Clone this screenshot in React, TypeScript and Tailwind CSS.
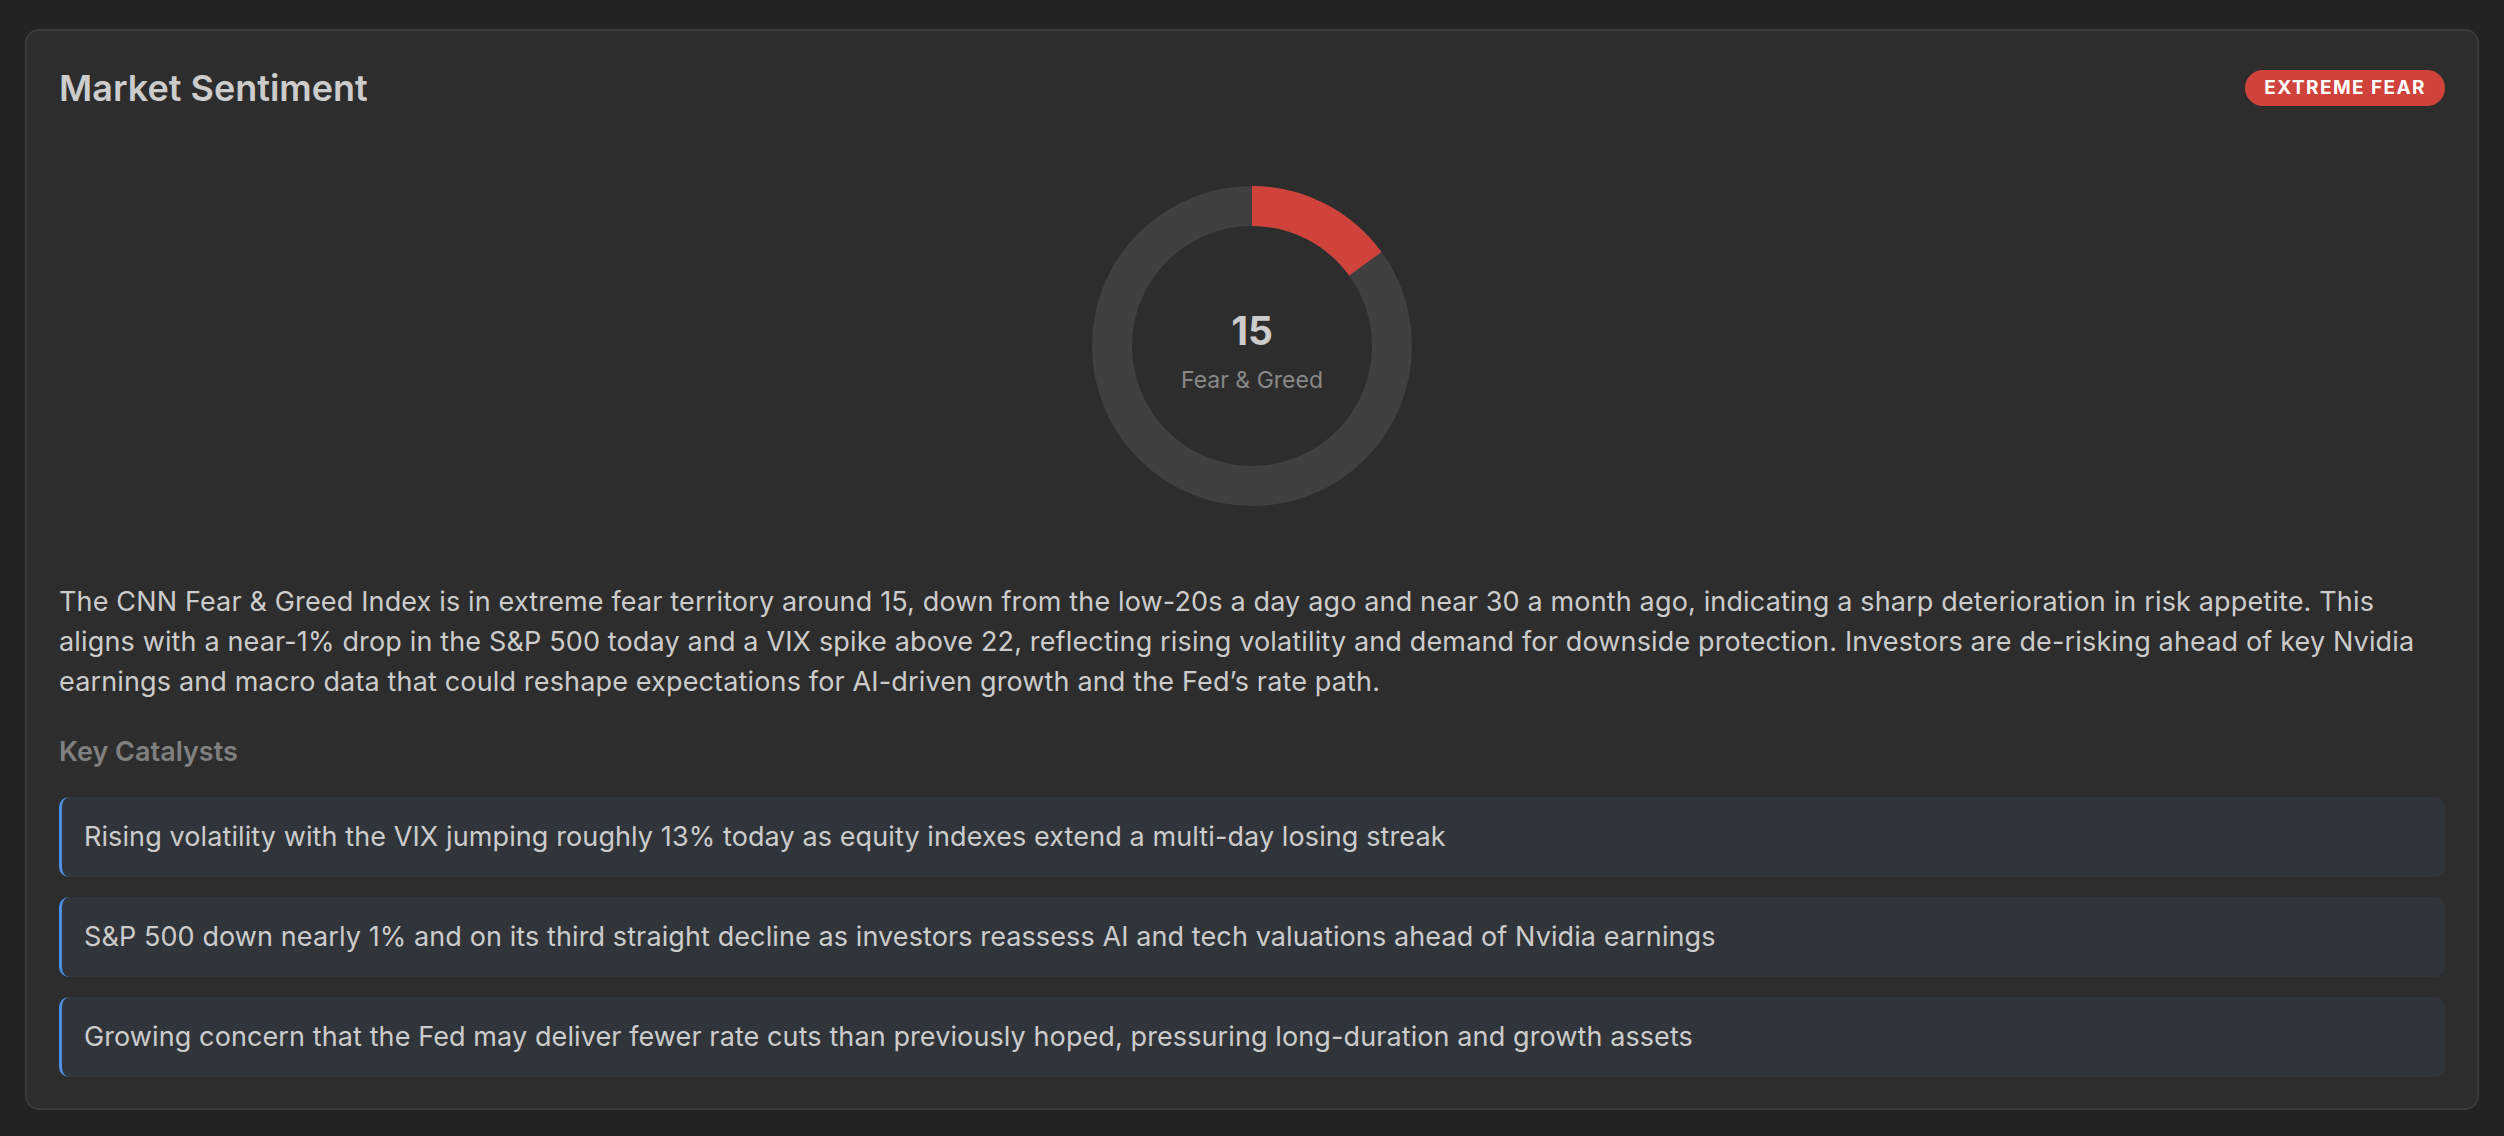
import React from "react";

const catalysts = [
  "Rising volatility with the VIX jumping roughly 13% today as equity indexes extend a multi-day losing streak",
  "S&P 500 down nearly 1% and on its third straight decline as investors reassess AI and tech valuations ahead of Nvidia earnings",
  "Growing concern that the Fed may deliver fewer rate cuts than previously hoped, pressuring long-duration and growth assets",
];

function Gauge({ value }: { value: number }) {
  const r = 140;
  const c = 2 * Math.PI * r;
  const dash = (value / 100) * c;
  return (
    <div className="relative w-[320px] h-[320px]">
      <svg width="320" height="320" viewBox="0 0 320 320" className="block">
        <circle cx="160" cy="160" r={r} fill="none" stroke="#404040" strokeWidth="40" />
        <circle
          cx="160"
          cy="160"
          r={r}
          fill="none"
          stroke="#d0433d"
          strokeWidth="40"
          strokeDasharray={`${dash} ${c}`}
          transform="rotate(-90 160 160)"
        />
      </svg>
      <div className="absolute inset-0 flex flex-col items-center justify-center pt-[12px]">
        <div className="text-[39px] leading-[1.2] font-bold text-[#cccccc]">{value}</div>
        <div className="mt-[9px] text-[23px] leading-[1.4] text-[#888888]">Fear &amp; Greed</div>
      </div>
    </div>
  );
}

export default function App() {
  return (
    <div
      className="min-h-screen bg-[#232323] px-[25px] pt-[29px] pb-[24px]"
      style={{ fontFamily: "Inter, 'Noto Sans', sans-serif" }}
    >
      <div className="rounded-[14px] border-2 border-[#3a3a3a] bg-[#2d2d2d] p-[32px] pb-[31px]">
        <div className="flex items-center justify-between">
          <h2 className="text-[36px] leading-[1.4] font-semibold text-[#cccccc]">Market Sentiment</h2>
          <span className="rounded-full bg-[#d0433d] px-[19px] h-[36px] flex items-center text-[19px] font-bold tracking-[0.075em] text-white">
            EXTREME FEAR
          </span>
        </div>

        <div className="mt-[73px] flex justify-center">
          <Gauge value={15} />
        </div>

        <p className="mt-[76px] text-[27px] leading-[40px] tracking-[0.15px] text-[#cccccc]">
          The CNN Fear &amp; Greed Index is in extreme fear territory around 15, down from the low-20s a day ago and near 30 a
          month ago, indicating a sharp deterioration in risk appetite. This aligns with a near-1% drop in the S&amp;P 500
          today and a VIX spike above 22, reflecting rising volatility and demand for downside protection. Investors are
          de-risking ahead of key Nvidia earnings and macro data that could reshape expectations for AI-driven growth and the
          Fed’s rate path.
        </p>

        <h3 className="mt-[30px] text-[27px] leading-[40px] font-semibold text-[#808080]">Key Catalysts</h3>

        <ul className="mt-[25px] flex flex-col gap-[20px]">
          {catalysts.map((t) => (
            <li
              key={t}
              className="rounded-[10px] border-l-[3px] border-[#4a90e2] bg-[#31353a] pl-[22px] pr-[24px] py-[20px] text-[27px] leading-[40px] tracking-[0.1px] text-[#cccccc]"
            >
              {t}
            </li>
          ))}
        </ul>
      </div>
    </div>
  );
}
